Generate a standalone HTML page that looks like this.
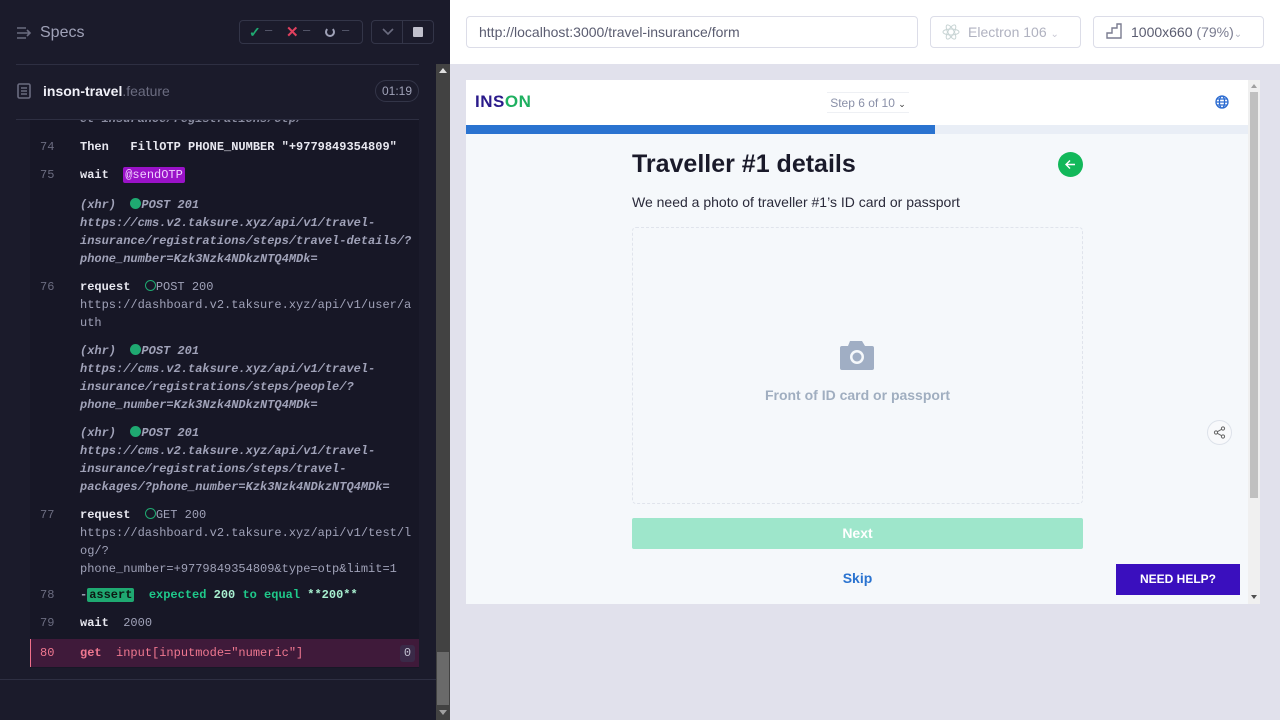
<!DOCTYPE html>
<html><head><meta charset="utf-8"><style>
*{margin:0;padding:0;box-sizing:border-box}
body{width:1280px;height:720px;overflow:hidden;position:relative;font-family:"Liberation Sans",sans-serif;background:#e1e1ec}
.abs{position:absolute}
#left{left:0;top:0;width:450px;height:720px;background:#1b1b2b}
.mono{font-family:"Liberation Mono",monospace;font-size:12px;line-height:18px;white-space:pre}
.ln{position:absolute;left:40px;color:#6b6c80;font-family:"Liberation Mono",monospace;font-size:12px}
.t{position:absolute;left:80px}
.w{color:#e8e8f0;font-weight:bold}
.g{color:#a0a2b8}
.i{color:#a0a2b8;font-style:italic;font-weight:bold}
.dot{display:inline-block;width:11px;height:11px;border-radius:50%;background:#1fa971;vertical-align:-1px}
.odot{display:inline-block;width:11px;height:11px;border-radius:50%;border:1.5px solid #1fa971;vertical-align:-1px}
</style></head><body>
<div id="left" class="abs">
  <svg class="abs" style="left:16px;top:26px" width="16" height="14"><path d="M1 2h9M1 7h13M1 12h9M11 4l3 3-3 3" stroke="#6b6c80" stroke-width="1.6" fill="none"/></svg>
  <div class="abs" style="left:40px;top:24px;color:#a0a2b8;font-size:16px">Specs</div>
  <div class="abs" style="left:239px;top:20px;width:124px;height:24px;border:1px solid #333548;border-radius:4px"></div>
  <div class="abs" style="left:249px;top:24px;color:#1fa971;font-size:14px;font-weight:bold">✓</div>
  <div class="abs" style="left:265px;top:22px;color:#5a5c70;font-size:13px">–</div>
  <div class="abs" style="left:286px;top:23px;color:#e0405e;font-size:15px;font-weight:bold">✕</div>
  <div class="abs" style="left:303px;top:22px;color:#5a5c70;font-size:13px">–</div>
  <div class="abs" style="left:325px;top:27px;width:10px;height:10px;border:2px solid #a0a2b8;border-top-color:transparent;border-radius:50%"></div>
  <div class="abs" style="left:342px;top:22px;color:#5a5c70;font-size:13px">–</div>
  <div class="abs" style="left:371px;top:20px;width:63px;height:24px;border:1px solid #333548;border-radius:4px"></div>
  <div class="abs" style="left:402px;top:21px;width:1px;height:22px;background:#333548"></div>
  <svg class="abs" style="left:382px;top:28px" width="12" height="8"><path d="M1 1l5 5 5-5" stroke="#6b6c80" stroke-width="1.6" fill="none"/></svg>
  <div class="abs" style="left:413px;top:27px;width:10px;height:10px;background:#c0c0cc;border-radius:1px"></div>
  <div class="abs" style="left:16px;top:64px;width:403px;height:1px;background:#2e2f42"></div>
  <svg class="abs" style="left:17px;top:83px" width="14" height="16"><rect x="1" y="1" width="12" height="14" rx="1.5" stroke="#6b6c80" stroke-width="1.6" fill="none"/><path d="M4 5h6M4 8h6M4 11h6" stroke="#6b6c80" stroke-width="1.4"/></svg>
  <div class="abs" style="left:43px;top:83px;font-size:14px;color:#f0f0f8;font-weight:bold">inson-travel<span style="color:#6b6c80;font-weight:normal">.feature</span></div>
  <div class="abs" style="left:375px;top:80px;width:44px;height:22px;border:1px solid #333548;border-radius:11px;color:#a0a2b8;font-size:12px;text-align:center;line-height:20px">01:19</div>
  <div class="abs" style="left:16px;top:119px;width:403px;height:1px;background:#2e2f42"></div>
  <div class="abs" style="left:30px;top:120px;width:389px;height:548px;background:#171726;overflow:hidden">
    <div class="mono" style="position:relative;left:-30px;top:-120px;width:450px;height:700px">
      <div class="t i" style="top:110px;color:#8a8ca0">et-insurance/registrations/otp/</div>
      <div class="ln" style="top:138px">74</div><div class="t mono w" style="top:138px">Then   FillOTP PHONE_NUMBER "+9779849354809"</div>
      <div class="ln" style="top:166px">75</div><div class="t mono w" style="top:166px">wait  <span style="background:#9a12c8;color:#f0d0ff;font-weight:normal;padding:1px 2px;border-radius:2px">@sendOTP</span></div>
      <div class="t mono i" style="top:196px">(xhr)  <span class="dot"></span>POST 201
https://cms.v2.taksure.xyz/api/v1/travel-
insurance/registrations/steps/travel-details/?
phone_number=Kzk3Nzk4NDkzNTQ4MDk=</div>
      <div class="ln" style="top:278px">76</div><div class="t mono" style="top:278px"><span class="w">request</span>  <span class="odot"></span><span class="g">POST 200
https://dashboard.v2.taksure.xyz/api/v1/user/a
uth</span></div>
      <div class="t mono i" style="top:342px">(xhr)  <span class="dot"></span>POST 201
https://cms.v2.taksure.xyz/api/v1/travel-
insurance/registrations/steps/people/?
phone_number=Kzk3Nzk4NDkzNTQ4MDk=</div>
      <div class="t mono i" style="top:424px">(xhr)  <span class="dot"></span>POST 201
https://cms.v2.taksure.xyz/api/v1/travel-
insurance/registrations/steps/travel-
packages/?phone_number=Kzk3Nzk4NDkzNTQ4MDk=</div>
      <div class="ln" style="top:506px">77</div><div class="t mono" style="top:506px"><span class="w">request</span>  <span class="odot"></span><span class="g">GET 200
https://dashboard.v2.taksure.xyz/api/v1/test/l
og/?
phone_number=+9779849354809&amp;type=otp&amp;limit=1</span></div>
      <div class="ln" style="top:586px">78</div><div class="t mono" style="top:586px;color:#1fc98a;font-weight:bold"><span class="g">-</span><span style="background:#1fa971;color:#0d1a14;padding:0 2px;border-radius:2px">assert</span>  expected <span style="color:#a8f0d0">200</span> to equal <span style="color:#a8f0d0">**200**</span></div>
      <div class="ln" style="top:614px">79</div><div class="t mono" style="top:614px"><span class="w">wait</span>  <span class="g">2000</span></div>
      <div class="abs" style="left:29px;top:639px;width:390px;height:28px;background:#3f1a3a;border-left:2px solid #f0708a"></div>
      <div class="ln" style="top:644px;color:#f07890">80</div><div class="t mono" style="top:644px;color:#f07890;font-weight:bold">get  <span style="font-weight:normal">input[inputmode="numeric"]</span></div>
      <div class="abs" style="left:400px;top:645px;width:15px;height:17px;background:#3a2a48;border-radius:3px;color:#c0c0d0;font-size:12px;text-align:center;line-height:17px;font-family:'Liberation Mono',monospace">0</div>
    </div>
  </div>
  <div class="abs" style="left:0;top:679px;width:436px;height:1px;background:#2e2f42"></div>
  <div class="abs" style="left:436px;top:64px;width:14px;height:656px;background:#424242"></div>
  <div class="abs" style="left:437px;top:652px;width:12px;height:53px;background:#6a6a6a"></div>
  <div class="abs" style="left:439px;top:68px;width:0;height:0;border:4px solid transparent;border-bottom:5px solid #e0e0e0;border-top:0"></div>
  <div class="abs" style="left:439px;top:710px;width:0;height:0;border:4px solid transparent;border-top:5px solid #a0a0a0;border-bottom:0"></div>
</div>
<div class="abs" style="left:450px;top:0;width:830px;height:64px;background:#fff"></div>
<div class="abs" style="left:466px;top:16px;width:452px;height:32px;border:1px solid #dcdde8;border-radius:4px;font-size:14px;color:#5a5c70;padding:7px 12px">http://localhost:3000/travel-insurance/form</div>
<div class="abs" style="left:930px;top:16px;width:151px;height:32px;border:1px solid #dcdde8;border-radius:4px;font-size:14px;color:#b0b2c0;padding:7px 0 0 37px">Electron 106 <span style="font-size:10px;color:#c8c8d4">&#8964;</span></div>
<svg class="abs" style="left:942px;top:23px" width="18" height="18"><g stroke="#c8d4d4" fill="none" stroke-width="1"><ellipse cx="9" cy="9" rx="8" ry="3"/><ellipse cx="9" cy="9" rx="8" ry="3" transform="rotate(60 9 9)"/><ellipse cx="9" cy="9" rx="8" ry="3" transform="rotate(-60 9 9)"/></g></svg>
<div class="abs" style="left:1093px;top:16px;width:171px;height:32px;border:1px solid #dcdde8;border-radius:4px;font-size:14px;color:#5a5c70;padding:7px 0 0 37px">1000x660 <span style="color:#7a7c90">(79%)</span><span style="font-size:10px;color:#b0b2c0">&#8964;</span></div>
<svg class="abs" style="left:1106px;top:23px" width="16" height="16"><path d="M1 15V10h5V5h5V1h4v14z" stroke="#7a7c90" stroke-width="1.4" fill="none"/></svg>
<div class="abs" style="left:466px;top:80px;width:794px;height:524px;background:#f5f8fb;overflow:hidden">
  <div class="abs" style="left:0;top:0;width:782px;height:45px;background:#fff"></div>
  <div class="abs" style="left:9px;top:12px;font-size:17px;font-weight:bold;color:#2a1a8a;letter-spacing:0.5px">INS<span style="color:#1fb060">ON</span></div>
  <div class="abs" style="left:361px;top:12px;width:82px;height:21px;border-top:1px solid #eef0f4;border-bottom:1px solid #eef0f4;font-size:12px;color:#8a90a8;padding-top:3px;text-align:center">Step 6 of 10 <span style="color:#333;font-size:9px">&#8964;</span></div>
  <svg class="abs" style="left:749px;top:15px" width="14" height="14"><g stroke="#2a6ad0" stroke-width="1.3" fill="none"><circle cx="7" cy="7" r="6"/><ellipse cx="7" cy="7" rx="2.6" ry="6"/><path d="M1 7h12M2 4h10M2 10h10"/></g></svg>
  <div class="abs" style="left:0;top:45px;width:782px;height:9px;background:#e9eef6"></div>
  <div class="abs" style="left:0;top:45px;width:469px;height:9px;background:#2a73d0"></div>
  <div class="abs" style="left:166px;top:70px;font-size:25px;font-weight:bold;color:#1a1a2a">Traveller #1 details</div>
  <div class="abs" style="left:592px;top:72px;width:25px;height:25px;border-radius:50%;background:#12b85a"></div>
  <svg class="abs" style="left:597px;top:77px" width="15" height="15"><path d="M12 7.5H3M7 3.5l-4 4 4 4" stroke="#fff" stroke-width="1.4" fill="none"/></svg>
  <div class="abs" style="left:166px;top:114px;font-size:14px;color:#2a2a3a">We need a photo of traveller #1’s ID card or passport</div>
  <div class="abs" style="left:166px;top:147px;width:451px;height:277px;border:1.5px dashed #e0e4ec;border-radius:4px"></div>
  <svg class="abs" style="left:372px;top:258px" width="38" height="34"><path d="M12 3h12l3 5h7a2 2 0 0 1 2 2v20a2 2 0 0 1-2 2H4a2 2 0 0 1-2-2V10a2 2 0 0 1 2-2h6z" fill="#a0aec4"/><circle cx="19" cy="19" r="7" fill="#f5f8fb"/><circle cx="19" cy="19" r="4.5" fill="#a0aec4"/></svg>
  <div class="abs" style="left:166px;top:307px;width:451px;text-align:center;font-size:14px;color:#a0aec0;font-weight:bold">Front of ID card or passport</div>
  <div class="abs" style="left:166px;top:438px;width:451px;height:31px;background:#9ee6cb;border-radius:2px;color:#fff;font-size:14px;font-weight:bold;text-align:center;line-height:31px">Next</div>
  <div class="abs" style="left:166px;top:490px;width:451px;text-align:center;font-size:14px;color:#2a73d0;font-weight:bold">Skip</div>
  <div class="abs" style="left:650px;top:484px;width:124px;height:31px;background:#3a0fbe;color:#fff;font-size:12px;font-weight:bold;text-align:center;line-height:31px">NEED HELP?</div>
  <div class="abs" style="left:741px;top:340px;width:25px;height:25px;border-radius:50%;border:1.5px solid #dde2ea;background:#f8f9fb"></div>
  <svg class="abs" style="left:746px;top:345px" width="15" height="15"><g fill="none" stroke="#666" stroke-width="1"><circle cx="11" cy="3.5" r="1.6"/><circle cx="4" cy="7.5" r="1.6"/><circle cx="11" cy="11.5" r="1.6"/><path d="M9.6 4.3L5.4 6.7M5.4 8.3l4.2 2.4"/></g></svg>
  <div class="abs" style="left:782px;top:0;width:12px;height:524px;background:#f0f0f0"></div>
  <div class="abs" style="left:784px;top:12px;width:8px;height:406px;background:#c0c0c0"></div>
  <div class="abs" style="left:785px;top:4px;width:0;height:0;border:3px solid transparent;border-bottom:4px solid #a0a0a0;border-top:0"></div>
  <div class="abs" style="left:785px;top:515px;width:0;height:0;border:3px solid transparent;border-top:4px solid #505050;border-bottom:0"></div>
</div>
</body></html>
